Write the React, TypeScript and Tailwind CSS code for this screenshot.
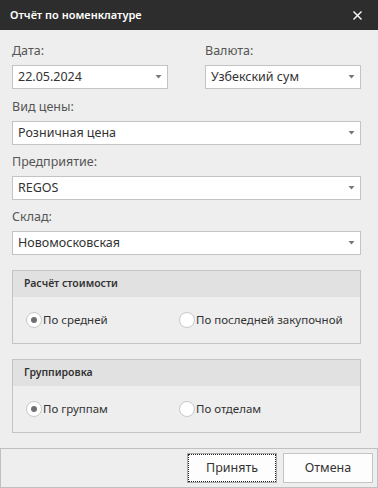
import React from "react";

const font = { fontFamily: '"Noto Sans", "Open Sans", Arial, sans-serif' };

function Arrow() {
  return (
    <svg width="7" height="4" viewBox="0 0 7 4" className="shrink-0">
      <path d="M0.5 0 H6.5 L3.5 3.5 Z" fill="#777777" />
    </svg>
  );
}

function Select({ value, className = "" }: { value: string; className?: string }) {
  return (
    <div
      className={`h-[24px] bg-white border border-[#c3c3c3] flex items-center justify-between pl-[5px] pr-[5px] ${className}`}
    >
      <span className="text-[12.5px] leading-none text-[#333333]">{value}</span>
      <Arrow />
    </div>
  );
}

function Label({ children }: { children: React.ReactNode }) {
  return <div className="h-[20px] leading-[20px] text-[12.5px] text-[#555555] mb-[4px]">{children}</div>;
}

function Radio({ checked, label, className = "" }: { checked?: boolean; label: string; className?: string }) {
  return (
    <div className={`flex items-center whitespace-nowrap ${className}`}>
      <div className="w-[16px] h-[16px] rounded-full border border-[#c8c8c8] bg-white flex items-center justify-center shrink-0">
        {checked && <div className="w-[6px] h-[6px] rounded-full bg-[#707070]" />}
      </div>
      <span className="ml-[1px] text-[11.5px] leading-none text-[#333333]">{label}</span>
    </div>
  );
}

function Group({ title, a, b }: { title: string; a: string; b: string }) {
  return (
    <div className="border border-[#c4c4c4] h-[74px] flex flex-col">
      <div className="h-[26px] bg-[#e1e1e1] flex items-center pl-[11px] text-[10.5px] font-semibold text-[#333333]">
        {title}
      </div>
      <div className="flex-1 flex items-center pl-[13px]">
        <Radio checked label={a} className="w-[153px]" />
        <Radio label={b} />
      </div>
    </div>
  );
}

export default function App() {
  return (
    <div className="w-[378px] h-[488px] bg-[#eeeeee] flex flex-col overflow-hidden" style={font}>
      <div className="h-[30px] bg-[#2d2d2d] flex items-center justify-between pl-[10px] pr-[16px] shrink-0">
        <span className="text-white text-[11px] font-semibold">Отчёт по номенклатуре</span>
        <svg width="9" height="9" viewBox="0 0 9 9">
          <path d="M0.5 0.5 L8.5 8.5 M8.5 0.5 L0.5 8.5" stroke="#ffffff" strokeWidth="1.4" />
        </svg>
      </div>

      <div className="pl-[12px] pr-[17px] pt-[11px] flex flex-col">
        <div className="flex justify-between">
          <div className="w-[156px]">
            <Label>Дата:</Label>
            <Select value="22.05.2024" />
          </div>
          <div className="w-[156px]">
            <Label>Валюта:</Label>
            <Select value="Узбекский сум" />
          </div>
        </div>
        <div className="mt-[8px]">
          <Label>Вид цены:</Label>
          <Select value="Розничная цена" />
        </div>
        <div className="mt-[7px]">
          <Label>Предприятие:</Label>
          <Select value="REGOS" />
        </div>
        <div className="mt-[7px]">
          <Label>Склад:</Label>
          <Select value="Новомосковская" />
        </div>
        <div className="mt-[15px]">
          <Group title="Расчёт стоимости" a="По средней" b="По последней закупочной" />
        </div>
        <div className="mt-[15px]">
          <Group title="Группировка" a="По группам" b="По отделам" />
        </div>
      </div>

      <div className="mt-auto h-[40px] border border-[#c0c0c0] flex items-center justify-end gap-[6px] pr-[4px] shrink-0">
        <button className="relative w-[90px] h-[30px] bg-[#fdfdfd] border border-[#a9a9a9] text-[12.5px] text-[#333333]">
          <span className="absolute inset-0 border border-dotted border-[#222222]" />
          Принять
        </button>
        <button className="w-[90px] h-[30px] bg-[#fdfdfd] border border-[#c4c4c4] text-[12.5px] text-[#333333]">
          Отмена
        </button>
      </div>
    </div>
  );
}
